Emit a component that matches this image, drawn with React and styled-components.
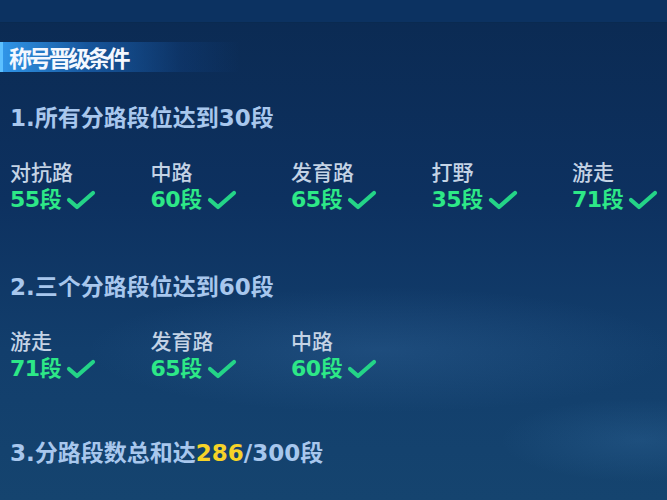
import React from "react";
import styled, { createGlobalStyle } from "styled-components";

const GlobalStyle = createGlobalStyle`
  html, body {
    margin: 0;
    padding: 0;
    background: #0b2b54;
  }
  body {
    font-family: "DejaVu Sans", "Noto Sans CJK SC", sans-serif;
  }
`;

const Page = styled.div`
  width: 667px;
  height: 500px;
  overflow: hidden;
  background:
    radial-gradient(ellipse 420px 90px at 380px 350px, rgba(90, 150, 210, 0.16), transparent 70%),
    radial-gradient(ellipse 200px 60px at 640px 440px, rgba(90, 160, 220, 0.14), transparent 70%),
    linear-gradient(180deg, #0b2a52 0%, #0d3160 40%, #123e6c 70%, #15446f 100%);
  display: flex;
  flex-direction: column;
`;

const TopStrip = styled.div`
  height: 22px;
  background: #0c3261;
  border-bottom: 1px solid #0a2a50;
`;

const Header = styled.div`
  margin-top: 19px;
  height: 30px;
  width: 240px;
  display: flex;
  align-items: center;
  padding-left: 6px;
  box-sizing: border-box;
  border-left: 3px solid #5cc0ff;
  background: linear-gradient(90deg, rgba(50, 155, 240, 0.95) 0%, rgba(30, 115, 205, 0.6) 35%, rgba(20, 80, 160, 0.22) 75%, transparent 100%);
  color: #f4f8ff;
  font-family: "Noto Sans CJK SC", sans-serif;
  font-size: 23px;
  font-weight: 700;
  letter-spacing: -3.3px;
`;

const Section = styled.div`
  padding-left: 10px;
  margin-top: ${(p) => p.$gap}px;
`;

const Title = styled.div`
  color: #a8c7ed;
  font-size: 23px;
  font-weight: 700;
  line-height: 28px;
`;

const Highlight = styled.span`
  color: #f6d328;
`;

const Lanes = styled.div`
  display: grid;
  grid-template-columns: repeat(5, 140.5px);
  margin-top: 26px;
`;

const Lane = styled.div`
  display: flex;
  flex-direction: column;
`;

const LaneName = styled.div`
  color: #c4d3e5;
  font-family: "Noto Sans CJK SC", sans-serif;
  font-size: 21px;
  font-weight: 500;
  line-height: 26px;
`;

const Value = styled.div`
  display: flex;
  align-items: center;
  gap: 5px;
  margin-top: 3px;
  color: #2de887;
  font-size: 22px;
  font-weight: 700;
  line-height: 26px;
  letter-spacing: -0.5px;
`;

const Check = () => (
  <svg width="30" height="22" viewBox="0 0 30 22">
    <path d="M3 11 L11 18 L27 4" fill="none" stroke="#24d487" strokeWidth="4.2" strokeLinecap="round" strokeLinejoin="round" />
  </svg>
);

const LaneItem = ({ name, value }) => (
  <Lane>
    <LaneName>{name}</LaneName>
    <Value>
      {value}段
      <Check />
    </Value>
  </Lane>
);

const allLanes = [
  { name: "对抗路", value: 55 },
  { name: "中路", value: 60 },
  { name: "发育路", value: 65 },
  { name: "打野", value: 35 },
  { name: "游走", value: 71 },
];

const topLanes = [
  { name: "游走", value: 71 },
  { name: "发育路", value: 65 },
  { name: "中路", value: 60 },
];

export default function App() {
  return (
    <>
      <GlobalStyle />
      <Page>
        <TopStrip />
        <Header>称号晋级条件</Header>
        <Section $gap={32}>
          <Title>1.所有分路段位达到30段</Title>
          <Lanes>
            {allLanes.map((l) => (
              <LaneItem key={l.name} {...l} />
            ))}
          </Lanes>
        </Section>
        <Section $gap={60}>
          <Title>2.三个分路段位达到60段</Title>
          <Lanes>
            {topLanes.map((l) => (
              <LaneItem key={l.name} {...l} />
            ))}
          </Lanes>
        </Section>
        <Section $gap={57}>
          <Title>
            3.分路段数总和达<Highlight>286</Highlight>/300段
          </Title>
        </Section>
      </Page>
    </>
  );
}
